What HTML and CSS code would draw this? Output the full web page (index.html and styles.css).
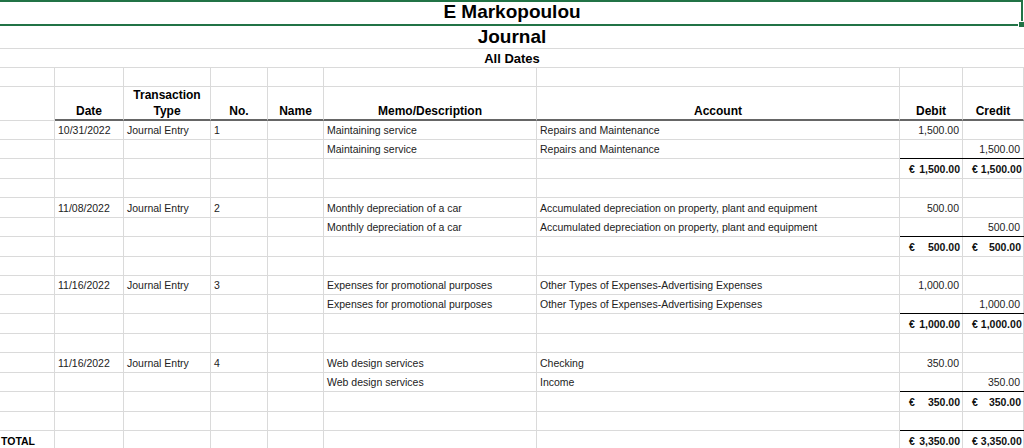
FILE: index.html
```html
<!DOCTYPE html>
<html lang="en">
<head>
<meta charset="utf-8">
<title>Journal - E Markopoulou</title>
<link rel="stylesheet" href="styles.css">
</head>
<body>
<div class="sheet">
  <div class="title t1">E Markopoulou</div>
  <div class="title t2">Journal</div>
  <div class="title t3">All Dates</div>

  <div class="row h19"><div class="c"></div><div class="c"></div><div class="c"></div><div class="c"></div><div class="c"></div><div class="c"></div><div class="c"></div><div class="c"></div><div class="c"></div></div>

  <div class="row head">
    <div class="c"></div>
    <div class="c">Date</div>
    <div class="c">Transaction Type</div>
    <div class="c">No.</div>
    <div class="c">Name</div>
    <div class="c">Memo/Description</div>
    <div class="c">Account</div>
    <div class="c">Debit</div>
    <div class="c">Credit</div>
  </div>

  <!-- Entry 1 -->
  <div class="row h19"><div class="c"></div><div class="c">10/31/2022</div><div class="c">Journal Entry</div><div class="c">1</div><div class="c"></div><div class="c">Maintaining service</div><div class="c">Repairs and Maintenance</div><div class="c num">1,500.00</div><div class="c"></div></div>
  <div class="row h19"><div class="c"></div><div class="c"></div><div class="c"></div><div class="c"></div><div class="c"></div><div class="c">Maintaining service</div><div class="c">Repairs and Maintenance</div><div class="c"></div><div class="c num">1,500.00</div></div>
  <div class="row h20"><div class="c"></div><div class="c"></div><div class="c"></div><div class="c"></div><div class="c"></div><div class="c"></div><div class="c"></div><div class="c sum"><span class="cur">€</span><span>1,500.00</span></div><div class="c sum"><span class="cur">€</span><span>1,500.00</span></div></div>
  <div class="row h19"><div class="c"></div><div class="c"></div><div class="c"></div><div class="c"></div><div class="c"></div><div class="c"></div><div class="c"></div><div class="c"></div><div class="c"></div></div>

  <!-- Entry 2 -->
  <div class="row h20"><div class="c"></div><div class="c">11/08/2022</div><div class="c">Journal Entry</div><div class="c">2</div><div class="c"></div><div class="c">Monthly depreciation of a car</div><div class="c">Accumulated depreciation on property, plant and equipment</div><div class="c num">500.00</div><div class="c"></div></div>
  <div class="row h19"><div class="c"></div><div class="c"></div><div class="c"></div><div class="c"></div><div class="c"></div><div class="c">Monthly depreciation of a car</div><div class="c">Accumulated depreciation on property, plant and equipment</div><div class="c"></div><div class="c num">500.00</div></div>
  <div class="row h20"><div class="c"></div><div class="c"></div><div class="c"></div><div class="c"></div><div class="c"></div><div class="c"></div><div class="c"></div><div class="c sum"><span class="cur">€</span><span>500.00</span></div><div class="c sum"><span class="cur">€</span><span>500.00</span></div></div>
  <div class="row h19"><div class="c"></div><div class="c"></div><div class="c"></div><div class="c"></div><div class="c"></div><div class="c"></div><div class="c"></div><div class="c"></div><div class="c"></div></div>

  <!-- Entry 3 -->
  <div class="row h19"><div class="c"></div><div class="c">11/16/2022</div><div class="c">Journal Entry</div><div class="c">3</div><div class="c"></div><div class="c">Expenses for promotional purposes</div><div class="c">Other Types of Expenses-Advertising Expenses</div><div class="c num">1,000.00</div><div class="c"></div></div>
  <div class="row h19"><div class="c"></div><div class="c"></div><div class="c"></div><div class="c"></div><div class="c"></div><div class="c">Expenses for promotional purposes</div><div class="c">Other Types of Expenses-Advertising Expenses</div><div class="c"></div><div class="c num">1,000.00</div></div>
  <div class="row h20"><div class="c"></div><div class="c"></div><div class="c"></div><div class="c"></div><div class="c"></div><div class="c"></div><div class="c"></div><div class="c sum"><span class="cur">€</span><span>1,000.00</span></div><div class="c sum"><span class="cur">€</span><span>1,000.00</span></div></div>
  <div class="row h19"><div class="c"></div><div class="c"></div><div class="c"></div><div class="c"></div><div class="c"></div><div class="c"></div><div class="c"></div><div class="c"></div><div class="c"></div></div>

  <!-- Entry 4 -->
  <div class="row h20"><div class="c"></div><div class="c">11/16/2022</div><div class="c">Journal Entry</div><div class="c">4</div><div class="c"></div><div class="c">Web design services</div><div class="c">Checking</div><div class="c num">350.00</div><div class="c"></div></div>
  <div class="row h19"><div class="c"></div><div class="c"></div><div class="c"></div><div class="c"></div><div class="c"></div><div class="c">Web design services</div><div class="c">Income</div><div class="c"></div><div class="c num">350.00</div></div>
  <div class="row h20"><div class="c"></div><div class="c"></div><div class="c"></div><div class="c"></div><div class="c"></div><div class="c"></div><div class="c"></div><div class="c sum"><span class="cur">€</span><span>350.00</span></div><div class="c sum"><span class="cur">€</span><span>350.00</span></div></div>
  <div class="row h19"><div class="c"></div><div class="c"></div><div class="c"></div><div class="c"></div><div class="c"></div><div class="c"></div><div class="c"></div><div class="c"></div><div class="c"></div></div>

  <!-- Total -->
  <div class="row h20 total"><div class="c label">TOTAL</div><div class="c"></div><div class="c"></div><div class="c"></div><div class="c"></div><div class="c"></div><div class="c"></div><div class="c sum"><span class="cur">€</span><span>3,350.00</span></div><div class="c sum"><span class="cur">€</span><span>3,350.00</span></div></div>

  <div class="sel"><span class="handle"></span></div>
</div>
</body>
</html>
```

FILE: styles.css
```css
html, body {
  margin: 0;
  padding: 0;
  background: #ffffff;
}

body {
  font-family: "Liberation Sans", Arial, sans-serif;
  color: #222222;
  overflow: hidden;
}

.sheet {
  position: relative;
  width: 1024px;
  height: 448px;
  overflow: hidden;
}

/* Title rows (merged cells) */
.title {
  box-sizing: border-box;
  display: flex;
  align-items: center;
  justify-content: center;
  border-bottom: 1px solid #dadada;
  font-weight: bold;
  color: #000000;
  white-space: nowrap;
}

.t1 {
  height: 25px;
  font-size: 19px;
  line-height: 22px;
}

.t2 {
  height: 24px;
  font-size: 19px;
  line-height: 22px;
}

.t3 {
  height: 19px;
  font-size: 13px;
  line-height: 15px;
}

/* Grid rows */
.row {
  display: grid;
  grid-template-columns: 55px 69px 87px 57px 56px 213px 363px 63px 61px;
}

.h19 { height: 19px; }
.h20 { height: 20px; }

.c {
  box-sizing: border-box;
  min-width: 0;
  display: flex;
  align-items: flex-end;
  padding: 0 3px 3px 3px;
  border-right: 1px solid #dadada;
  border-bottom: 1px solid #dadada;
  font-size: 10.5px;
  line-height: 12px;
  white-space: nowrap;
}

/* Header row */
.head .c {
  height: 34px;
  justify-content: center;
  text-align: center;
  padding: 0 2px;
  font-size: 12px;
  line-height: 16px;
  font-weight: bold;
  color: #000000;
  white-space: normal;
  border-bottom: 2px solid #666666;
}

.head .c:first-child {
  border-bottom: 1px solid #dadada;
}

.num {
  justify-content: flex-end;
}

.sum {
  padding-left: 9px;
  padding-right: 2px;
  font-weight: bold;
  color: #111111;
  box-shadow: 0 -1px 0 #000000;
}

.sum .cur {
  margin-right: auto;
  padding-right: 3px;
}

.total .label {
  padding-left: 1px;
  font-weight: bold;
  color: #000000;
}

/* Active cell selection overlay */
.sel {
  position: absolute;
  left: -2px;
  top: 0;
  width: 1025px;
  height: 26px;
  box-sizing: border-box;
  border: 2px solid #217346;
  pointer-events: none;
}

.handle {
  position: absolute;
  right: -4px;
  bottom: -4px;
  width: 5px;
  height: 5px;
  background: #217346;
  border: 1px solid #ffffff;
}
```
